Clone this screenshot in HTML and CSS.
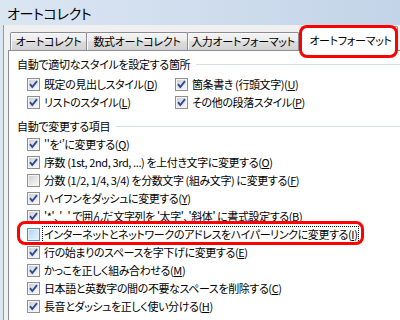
FILE: index.html
```html
<!DOCTYPE html>
<html lang="ja">
<head>
<meta charset="utf-8">
<link rel="stylesheet" href="styles.css">
</head>
<body>
<div class="window">
  <div class="titlebar">オートコレクト</div>
  <div class="client">
    <div class="tabs">
      <div class="tab t1">オートコレクト</div>
      <div class="tab t2">数式オートコレクト</div>
      <div class="tab t3">入力オートフォーマット</div>
      <div class="tab sel">オートフォーマット</div>
    </div>
    <div class="panel">
      <div class="head">自動で適切なスタイルを設定する箇所</div>
      <div class="grid2">
        <div class="cb"><span class="box on"><svg viewBox="0 0 11 11"><path d="M2 5.2 L4.3 8 L9 2.2"/></svg></span><span class="lbl">既定の見出しスタイル(<u>D</u>)</span></div>
        <div class="cb"><span class="box on"><svg viewBox="0 0 11 11"><path d="M2 5.2 L4.3 8 L9 2.2"/></svg></span><span class="lbl">箇条書き (行頭文字)(<u>U</u>)</span></div>
        <div class="cb"><span class="box on"><svg viewBox="0 0 11 11"><path d="M2 5.2 L4.3 8 L9 2.2"/></svg></span><span class="lbl">リストのスタイル(<u>L</u>)</span></div>
        <div class="cb"><span class="box on"><svg viewBox="0 0 11 11"><path d="M2 5.2 L4.3 8 L9 2.2"/></svg></span><span class="lbl">その他の段落スタイル(<u>P</u>)</span></div>
      </div>
      <div class="head h2">自動で変更する項目</div>
      <div class="list">
        <div class="cb"><span class="box on"><svg viewBox="0 0 11 11"><path d="M2 5.2 L4.3 8 L9 2.2"/></svg></span><span class="lbl">''を‘’に変更する(<u>Q</u>)</span></div>
        <div class="cb"><span class="box on"><svg viewBox="0 0 11 11"><path d="M2 5.2 L4.3 8 L9 2.2"/></svg></span><span class="lbl">序数 (1st, 2nd, 3rd, ...) を上付き文字に変更する(<u>O</u>)</span></div>
        <div class="cb"><span class="box"></span><span class="lbl">分数 (1/2, 1/4, 3/4) を分数文字 (組み文字) に変更する(<u>F</u>)</span></div>
        <div class="cb"><span class="box on"><svg viewBox="0 0 11 11"><path d="M2 5.2 L4.3 8 L9 2.2"/></svg></span><span class="lbl">ハイフンをダッシュに変更する(<u>Y</u>)</span></div>
        <div class="cb"><span class="box on"><svg viewBox="0 0 11 11"><path d="M2 5.2 L4.3 8 L9 2.2"/></svg></span><span class="lbl">'*'、'_' で囲んだ文字列を '太字'、'斜体' に書式設定する(<u>B</u>)</span></div>
        <div class="cb marked"><span class="box hover"></span><span class="lbl focus">インターネットとネットワークのアドレスをハイパーリンクに変更する(<u>I</u>)</span></div>
        <div class="cb"><span class="box on"><svg viewBox="0 0 11 11"><path d="M2 5.2 L4.3 8 L9 2.2"/></svg></span><span class="lbl">行の始まりのスペースを字下げに変更する(<u>E</u>)</span></div>
        <div class="cb"><span class="box on"><svg viewBox="0 0 11 11"><path d="M2 5.2 L4.3 8 L9 2.2"/></svg></span><span class="lbl">かっこを正しく組み合わせる(<u>M</u>)</span></div>
        <div class="cb"><span class="box on"><svg viewBox="0 0 11 11"><path d="M2 5.2 L4.3 8 L9 2.2"/></svg></span><span class="lbl">日本語と英数字の間の不要なスペースを削除する(<u>C</u>)</span></div>
        <div class="cb"><span class="box on"><svg viewBox="0 0 11 11"><path d="M2 5.2 L4.3 8 L9 2.2"/></svg></span><span class="lbl">長音とダッシュを正しく使い分ける(<u>H</u>)</span></div>
      </div>
    </div>
  </div>
</div>
</body>
</html>
```

FILE: styles.css
```css
html, body {
  margin: 0;
  padding: 0;
}
body {
  width: 400px;
  height: 320px;
  overflow: hidden;
  background: linear-gradient(to right, #dbe6f3, #c3d4e8);
  font-family: "Noto Sans CJK JP", "Noto Sans", sans-serif;
  font-feature-settings: "palt";
  color: #000;
}
.window {
  width: 400px;
  height: 320px;
}
.titlebar {
  height: 25px;
  line-height: 27px;
  padding-left: 7px;
  font-size: 14px;
  letter-spacing: -0.3px;
  box-sizing: border-box;
}
.client {
  margin-left: 3px;
  border-left: 1px solid #8d9aab;
  background: #f0f0f0;
  height: 295px;
  padding-left: 4px;
  box-sizing: border-box;
}
.tabs {
  display: flex;
  align-items: flex-end;
  height: 25px;
  padding-left: 2px;
  box-sizing: border-box;
  position: relative;
  z-index: 1;
}
.tab {
  height: 18px;
  box-sizing: border-box;
  border: 1px solid #898c95;
  border-bottom: none;
  border-radius: 2px 2px 0 0;
  background: linear-gradient(#f3f3f3 0%, #ececec 45%, #dedede 50%, #d2d2d2 100%);
  box-shadow: inset 1px 1px 0 #fafafa;
  font-size: 11px;
  letter-spacing: -0.3px;
  line-height: 17px;
  text-align: center;
  white-space: nowrap;
}
.t1 { width: 77px; }
.t2 { width: 102px; margin-left: -1px; }
.t3 { width: 112px; margin-left: -1px; }
.sel {
  width: 97px;
  height: 25px;
  margin-left: 2px;
  margin-bottom: -1px;
  background: #fff;
  box-shadow: none;
  line-height: 27px;
  padding-left: 2px;
  position: relative;
}
.sel::after {
  content: "";
  position: absolute;
  left: -3px;
  top: -2px;
  width: 99px;
  height: 33px;
  box-sizing: border-box;
  border: 3px solid #ff0000;
  border-radius: 8px;
}
.panel {
  background: #fff;
  border-top: 1px solid #898c95;
  border-left: 1px solid #898c95;
  height: 270px;
  box-sizing: border-box;
  padding: 4px 0 0 8px;
}
.head {
  display: flex;
  align-items: center;
  height: 18px;
  font-size: 11px;
  letter-spacing: -0.3px;
  white-space: nowrap;
}
.head::after {
  content: "";
  flex: 1;
  height: 1px;
  background: #d5dfe5;
  margin-left: 6px;
  margin-top: 1px;
}
.h2 {
  margin-top: 6px;
}
.grid2 {
  display: grid;
  grid-template-columns: 148px 1fr;
  padding-left: 10px;
  margin-top: 2px;
}
.list {
  padding-left: 10px;
}
.cb {
  display: flex;
  align-items: center;
  height: 18px;
  font-size: 11px;
  letter-spacing: -0.4px;
  white-space: nowrap;
  gap: 2px;
}
.box {
  width: 13px;
  height: 13px;
  flex: none;
  box-sizing: border-box;
  border: 1px solid #8e8f8f;
  box-shadow: inset 0 0 0 1px #f4f4f4;
  background: linear-gradient(135deg, #c6cad0 0%, #e8e8e8 55%, #fafafa 100%);
  display: flex;
  align-items: center;
  justify-content: center;
}
.box svg {
  width: 11px;
  height: 11px;
}
.box svg path {
  fill: none;
  stroke: #2a4a98;
  stroke-width: 1.9;
}
.box.hover {
  border-color: #5a8bb0;
  box-shadow: inset 0 0 0 1px #e2f1fc;
  background: linear-gradient(135deg, #a9d2f1 0%, #cfe7f8 55%, #e6f4fd 100%);
}
.lbl {
  border: 1px solid transparent;
  padding: 0 1px;
  line-height: 15px;
}
.lbl u {
  text-underline-offset: 1px;
}
.focus {
  border: 1px dotted #000;
}
.marked {
  position: relative;
  width: max-content;
}
.marked::before {
  content: "";
  position: absolute;
  left: -10px;
  right: -5px;
  top: -4px;
  bottom: -2px;
  border: 3px solid #ff0000;
  border-radius: 8px;
}
```
